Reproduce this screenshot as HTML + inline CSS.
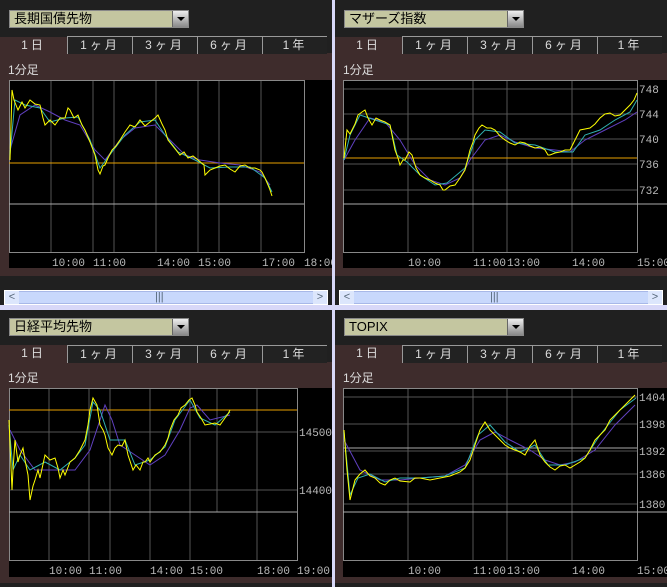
<!DOCTYPE html><html><head><meta charset="utf-8"><style>
*{margin:0;padding:0;box-sizing:border-box}
body{width:667px;height:587px;background:#d8d8f8;position:relative;overflow:hidden;font-family:"Liberation Sans","Noto Sans CJK JP",sans-serif}
.p{position:absolute;background:#202020;overflow:hidden}
.dd{position:absolute;left:9px;top:10px;width:180px;height:18px;background:#c4c6a0;border:1px solid #888;font-size:13px;color:#000;padding-left:4px;line-height:16px}
.dd i{position:absolute;right:0;top:0;width:16px;height:16px;background:linear-gradient(#eee,#888);border-left:1px solid #666}
.dd i:after{content:"";position:absolute;left:4px;top:6px;border:4px solid transparent;border-top:4px solid #000}
.red{position:absolute;left:0;right:0;background:#3e2c2c}
.tab{position:absolute;top:36px;height:18px;color:#ddd;font-size:12px;text-align:center;line-height:17px;border-top:1px solid #999;border-left:1px solid #999;background:#222;letter-spacing:3px}
.act{border:none;background:#3e2c2c;top:37px}
.lab{position:absolute;left:8px;color:#ddd;font-size:12px}
.ch{position:absolute;left:9px;background:#000}
svg{position:absolute;left:0;top:0}
.sb{position:absolute;left:4px;right:4px;top:290px;height:15px;background:#c8d8fc;border:1px solid #fff;box-shadow:inset 0 0 0 1px #a8b8e8}
.sb span{position:absolute;top:0;width:14px;height:13px;background:#dce6fc;color:#567;font-size:11px;text-align:center;line-height:13px}
text{font-family:"Liberation Mono",monospace;font-size:11px;fill:#bbb}
</style></head><body>

<!-- top-left -->
<div class="p" style="left:0;top:0;width:332px;height:305px">
<div class="dd">長期国債先物<i></i></div>
<div class="red" style="top:53px;height:223px"></div>
<div class="tab act" style="left:0;width:67px">1日</div>
<div class="tab" style="left:67px;width:65px">1ヶ月</div>
<div class="tab" style="left:132px;width:65px">3ヶ月</div>
<div class="tab" style="left:197px;width:65px">6ヶ月</div>
<div class="tab" style="left:262px;width:65px">1年</div>
<div class="lab" style="top:61px">1分足</div>
<div class="ch" style="top:80px;width:323px;height:188px"></div>
<svg width="332" height="305">
<g stroke="#555" fill="none"><path d="M51 80V252M93 80V252M114 80V252M156 80V252M198 80V252M219 80V252M261 80V252"/></g>
<rect x="9.5" y="80.5" width="295" height="172" fill="none" stroke="#888"/>
<path d="M9 204H304" stroke="#aaa"/>
<path d="M9 163H304" stroke="#e8a000"/>
<polyline fill="none" stroke="#6040c0" points="10,150 20,115 35,105 50,112 65,120 80,125 95,150 105,160 120,140 135,128 155,125 170,140 185,155 200,160 220,163 240,165 260,172 270,185"/>
<polyline fill="none" stroke="#30b0b0" points="10,155 15,100 25,105 40,108 50,122 65,118 78,117 90,140 100,168 112,152 125,135 140,122 155,120 165,135 178,152 195,160 210,168 230,167 250,167 265,178 272,192"/>
<polyline fill="none" stroke="#ff0" points="10,160 12,90 14,100 18,110 22,102 25,108 30,100 35,104 40,105 43,118 45,125 50,120 55,125 60,118 65,118 68,108 70,110 74,118 78,115 82,125 85,130 90,142 95,155 98,170 100,174 103,166 105,165 108,158 112,150 116,146 120,140 125,132 130,125 135,127 140,120 145,126 150,122 155,118 158,115 162,124 165,130 168,140 172,145 176,150 180,155 184,152 188,158 193,156 198,160 204,165 205,175 210,170 215,168 220,166 225,165 230,169 235,172 240,166 245,165 250,168 255,168 260,170 262,172 265,178 268,185 270,190 272,196"/>
<g><text x="52" y="266">10:00</text><text x="93" y="266">11:00</text><text x="157" y="266">14:00</text><text x="198" y="266">15:00</text><text x="262" y="266">17:00</text><text x="304" y="266">18:00</text></g>
</svg>
<div class="sb"><span style="left:0">&lt;</span><span style="right:0">&gt;</span><span style="left:150px;width:6px;background:none">|||</span></div>
</div>

<!-- top-right -->
<div class="p" style="left:335px;top:0;width:332px;height:305px">
<div class="dd">マザーズ指数<i></i></div>
<div class="red" style="top:53px;height:223px"></div>
<div class="tab act" style="left:0;width:67px">1日</div>
<div class="tab" style="left:67px;width:65px">1ヶ月</div>
<div class="tab" style="left:132px;width:65px">3ヶ月</div>
<div class="tab" style="left:197px;width:65px">6ヶ月</div>
<div class="tab" style="left:262px;width:65px">1年</div>
<div class="lab" style="top:61px">1分足</div>
<div class="ch" style="left:8px;top:80px;width:324px;height:188px"></div>
<svg width="332" height="305">
<g stroke="#555" fill="none"><path d="M73 80V252M138 80V252M172 80V252M237 80V252M8 89H302M8 114H302M8 139H302M8 164H302M8 190H302"/></g>
<rect x="8.5" y="80.5" width="294" height="172" fill="none" stroke="#888"/>
<path d="M8 204H332" stroke="#aaa"/>
<path d="M8 158H302" stroke="#e8a000"/>
<polyline fill="none" stroke="#6040c0" points="9,160 20,140 35,118 50,122 65,140 80,165 95,180 110,185 125,178 135,160 150,140 165,135 180,142 200,148 220,150 235,152 250,140 270,130 290,120 302,112"/>
<polyline fill="none" stroke="#30b0b0" points="9,160 15,135 25,115 40,120 55,125 62,155 72,162 85,175 100,185 112,183 130,168 140,140 150,130 165,132 180,143 200,145 220,152 238,152 250,135 265,130 280,120 295,112 302,100"/>
<polyline fill="none" stroke="#ff0" points="9,158 12,130 15,134 17,130 20,124 23,115 27,112 30,110 33,118 37,125 41,118 45,120 50,122 55,125 58,140 60,150 63,158 65,165 68,160 70,160 74,152 77,155 81,168 85,175 90,178 95,180 100,183 105,185 108,190 110,190 115,186 120,185 125,178 130,170 133,158 135,150 138,142 140,135 144,128 147,125 152,128 156,128 160,130 165,136 170,140 175,143 180,145 185,142 190,143 195,146 200,148 205,147 210,150 213,155 215,155 220,153 225,152 230,150 235,150 238,144 240,140 243,134 245,130 250,129 255,128 260,124 265,118 270,114 275,113 280,116 285,115 290,110 295,105 299,100 302,93"/>
<g><text x="304" y="93">748</text><text x="304" y="118">744</text><text x="304" y="143">740</text><text x="304" y="168">736</text><text x="304" y="194">732</text>
<text x="73" y="266">10:00</text><text x="138" y="266">11:00</text><text x="172" y="266">13:00</text><text x="237" y="266">14:00</text><text x="302" y="266">15:00</text></g>
</svg>
<div class="sb"><span style="left:0">&lt;</span><span style="right:0">&gt;</span><span style="left:150px;width:6px;background:none">|||</span></div>
</div>

<!-- bottom-left -->
<div class="p" style="left:0;top:310px;width:332px;height:277px">
<div class="dd" style="top:8px">日経平均先物<i></i></div>
<div class="red" style="top:52px;height:221px"></div>
<div class="tab" style="top:35px;left:0;width:67px;background:#3e2c2c;border:none">1日</div>
<div class="tab" style="top:35px;left:67px;width:65px">1ヶ月</div>
<div class="tab" style="top:35px;left:132px;width:65px">3ヶ月</div>
<div class="tab" style="top:35px;left:197px;width:65px">6ヶ月</div>
<div class="tab" style="top:35px;left:262px;width:65px">1年</div>
<div class="lab" style="top:59px">1分足</div>
<div class="ch" style="top:78px;width:323px;height:189px"></div>
<svg width="332" height="277">
<g stroke="#555" fill="none"><path d="M49 78V250M89 78V250M110 78V250M150 78V250M190 78V250M217 78V202M257 78V250M9 122H297M9 180H297"/></g>
<rect x="9.5" y="78.5" width="288" height="172" fill="none" stroke="#888"/>
<path d="M9 202H297" stroke="#aaa"/>
<path d="M9 100H297" stroke="#e8a000"/>
<g transform="translate(0,-310)">
<polyline fill="none" stroke="#6040c0" points="10,430 20,450 35,470 55,470 75,470 90,450 100,420 105,405 112,420 120,445 135,455 150,465 165,455 180,430 190,408 197,405 210,420 230,415"/>
<polyline fill="none" stroke="#30b0b0" points="9,425 13,470 20,455 30,470 45,462 60,470 75,458 85,445 93,402 100,410 110,440 125,440 135,465 150,460 165,447 175,420 190,400 200,418 215,425 230,412"/>
<polyline fill="none" stroke="#ff0" points="9,420 12,490 13,470 15,440 18,462 20,455 23,448 25,460 28,475 30,500 33,486 35,480 38,470 40,478 45,455 50,460 55,458 58,468 60,478 63,470 65,475 70,462 75,458 80,450 85,440 88,425 90,410 93,398 97,405 100,425 103,430 105,435 108,448 112,455 115,448 118,445 122,446 125,440 128,455 133,470 136,465 140,470 143,462 145,462 148,458 150,462 155,455 160,452 165,445 168,438 170,430 174,420 178,415 181,408 185,405 189,400 192,398 195,405 197,412 201,418 205,425 210,424 215,423 220,425 225,418 228,414 230,410"/>
</g>
<g><text x="299" y="126">14500</text><text x="299" y="184">14400</text>
<text x="49" y="264">10:00</text><text x="89" y="264">11:00</text><text x="150" y="264">14:00</text><text x="190" y="264">15:00</text><text x="257" y="264">18:00</text><text x="297" y="264">19:00</text></g>
</svg>
</div>

<!-- bottom-right -->
<div class="p" style="left:335px;top:310px;width:332px;height:277px">
<div class="dd" style="top:8px">TOPIX<i></i></div>
<div class="red" style="top:52px;height:221px"></div>
<div class="tab" style="top:35px;left:0;width:67px;background:#3e2c2c;border:none">1日</div>
<div class="tab" style="top:35px;left:67px;width:65px">1ヶ月</div>
<div class="tab" style="top:35px;left:132px;width:65px">3ヶ月</div>
<div class="tab" style="top:35px;left:197px;width:65px">6ヶ月</div>
<div class="tab" style="top:35px;left:262px;width:65px">1年</div>
<div class="lab" style="top:59px">1分足</div>
<div class="ch" style="left:8px;top:78px;width:324px;height:189px"></div>
<svg width="332" height="277">
<g stroke="#555" fill="none"><path d="M73 78V250M138 78V250M172 78V250M237 78V250M8 87H302M8 114H302M8 141H302M8 164H302M8 194H302"/></g>
<rect x="8.5" y="78.5" width="294" height="172" fill="none" stroke="#888"/>
<path d="M8 202H332M8 138H302" stroke="#aaa"/>
<g transform="translate(-335,-310)">
<polyline fill="none" stroke="#6040c0" points="344,440 360,470 380,480 400,480 420,478 445,476 465,465 480,440 495,432 510,440 530,450 545,460 560,465 575,462 595,450 615,425 635,405"/>
<polyline fill="none" stroke="#30b0b0" points="344,432 350,495 358,478 370,474 385,482 400,478 420,478 445,476 465,468 478,435 490,425 505,442 520,452 535,445 548,465 565,465 585,458 600,435 620,410 636,398"/>
<polyline fill="none" stroke="#ff0" points="344,430 347,470 350,500 353,488 355,480 360,474 365,470 370,476 375,478 380,483 385,485 390,480 395,478 400,481 410,482 415,478 420,478 430,480 440,478 450,476 460,472 465,468 470,460 475,445 480,430 485,422 490,430 495,435 500,440 505,445 510,448 515,450 520,452 525,455 530,446 535,440 540,455 545,462 550,467 555,470 560,466 565,465 570,468 575,465 580,462 585,458 590,450 595,440 600,435 605,430 610,420 615,415 620,410 625,405 630,400 635,395"/>
</g>
<g><text x="304" y="91">1404</text><text x="304" y="118">1398</text><text x="304" y="145">1392</text><text x="304" y="168">1386</text><text x="304" y="198">1380</text>
<text x="73" y="264">10:00</text><text x="138" y="264">11:00</text><text x="172" y="264">13:00</text><text x="237" y="264">14:00</text><text x="302" y="264">15:00</text></g>
</svg>
</div>
</body></html>
